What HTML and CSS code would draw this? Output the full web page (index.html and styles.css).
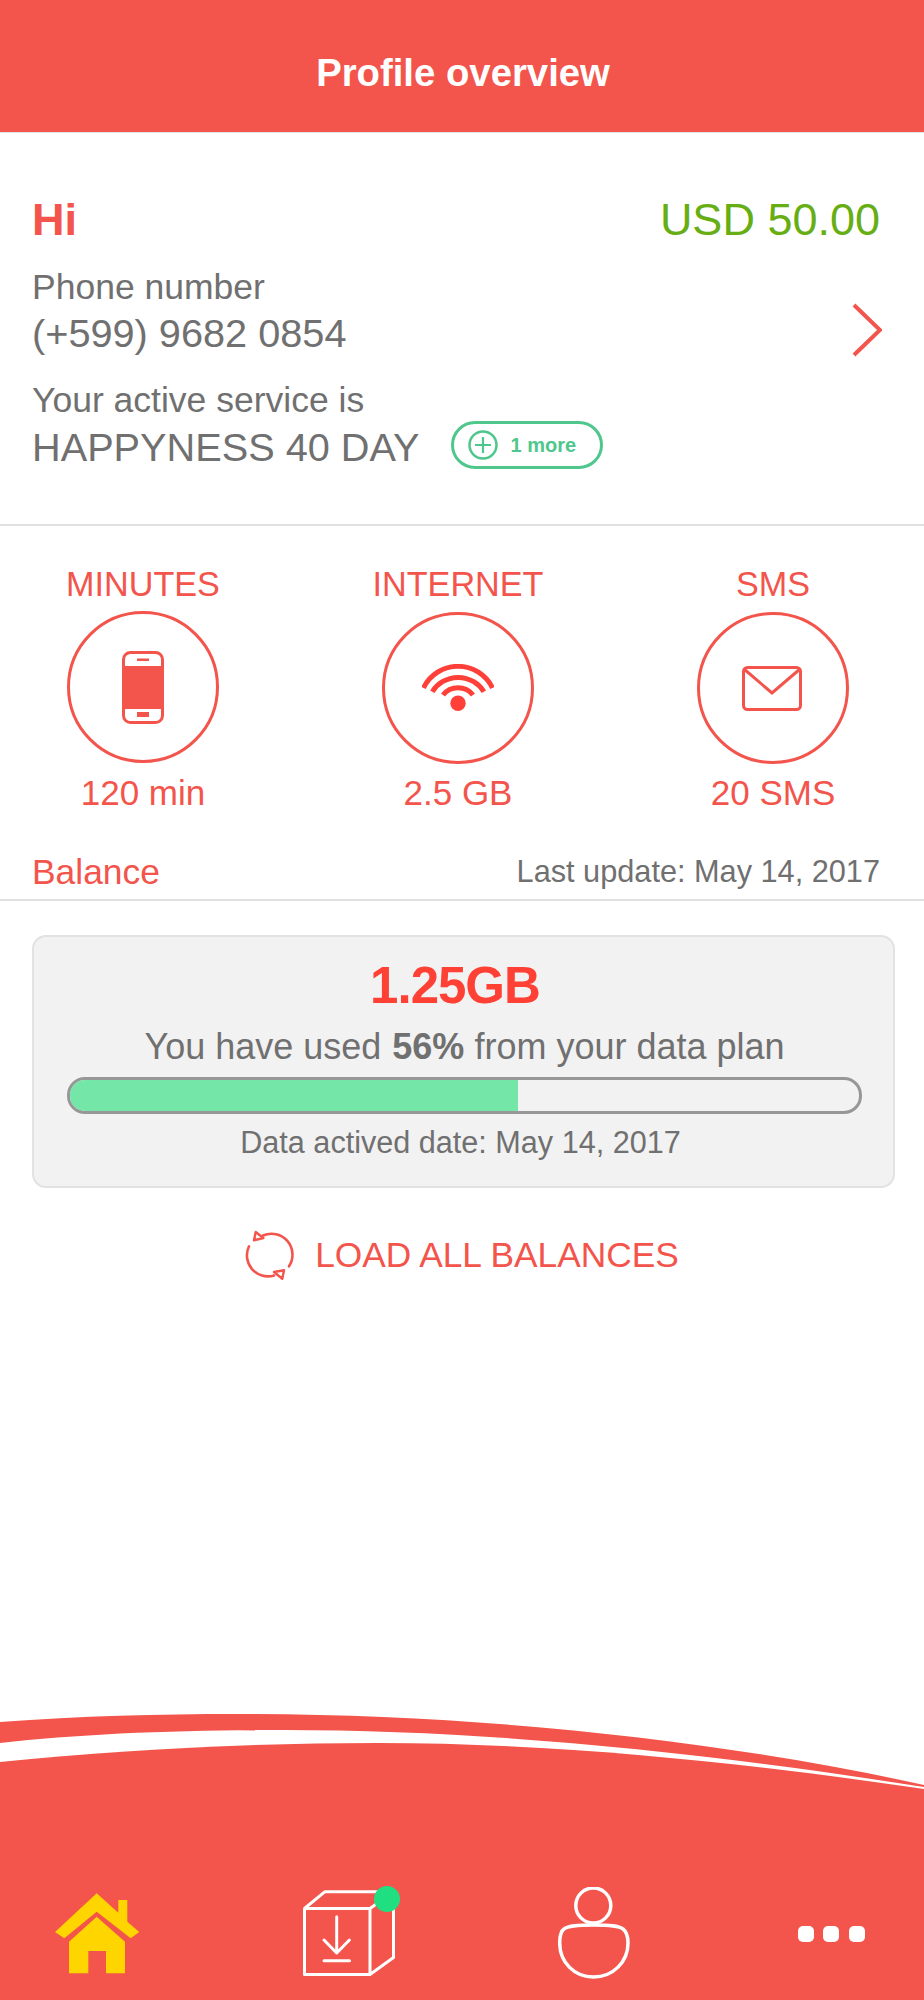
FILE: index.html
```html
<!DOCTYPE html>
<html>
<head>
  <meta charset="utf-8" />
  <title>Profile overview</title>
  <meta name="viewport" content="width=device-width, initial-scale=1">
  <link rel="stylesheet" href="styles.css">
</head>
<body>
  <div class="page">
    <header class="header">Profile overview</header>

    <section class="profile">
      <div class="row">
        <div class="hi">Hi</div>
        <div class="amount">USD 50.00</div>
      </div>
      <div class="row phone">
        <div>
          <div class="line">Phone number</div>
          <div class="value">(+599) 9682 0854</div>
        </div>
        <svg class="chevron" viewBox="0 0 30 54">
          <path d="M2 2 L28 27 L2 52" fill="none" stroke="#f3544b" stroke-width="4" />
        </svg>
      </div>
      <div class="service">
        <div class="line">Your active service is</div>
        <div class="plan">
          <span class="value">HAPPYNESS 40 DAY</span>
          <span class="more">
            <svg class="more-icon" viewBox="0 0 30 30">
              <circle cx="15" cy="15" r="13.5" fill="none" stroke="#4fc78c" stroke-width="2.5" />
              <path d="M15 7 V23 M7 15 H23" fill="none" stroke="#4fc78c" stroke-width="2.2" />
            </svg>
            1 more
          </span>
        </div>
      </div>
    </section>

    <section class="stats">
      <div class="stat">
        <div class="stat-text">MINUTES</div>
        <div class="circle">
          <svg class="icon-phone" viewBox="0 0 42 73">
            <rect x="1.5" y="1.5" width="39" height="70" rx="7" fill="none" stroke="#f3544b" stroke-width="3" />
            <rect x="1" y="15" width="40" height="43" fill="#f3544b" />
            <rect x="15" y="7.5" width="12" height="2.5" fill="#f3544b" />
            <rect x="15" y="61" width="12" height="5" fill="#f3544b" />
          </svg>
        </div>
        <div class="stat-value">120 min</div>
      </div>
      <div class="stat">
        <div class="stat-text">INTERNET</div>
        <div class="circle">
          <svg class="icon-wifi" viewBox="0 0 72 48">
            <path d="M1.5 24 A38.3 38.3 0 0 1 70.5 24" fill="none" stroke="#ff4038" stroke-width="5" />
            <path d="M10.3 27.7 A30.4 30.4 0 0 1 61.9 27.7" fill="none" stroke="#ff4038" stroke-width="5" />
            <path d="M21 31 A19 19 0 0 1 51 31" fill="none" stroke="#ff4038" stroke-width="5" />
            <circle cx="36" cy="39.3" r="7.7" fill="#ff4038" />
          </svg>
        </div>
        <div class="stat-value">2.5 GB</div>
      </div>
      <div class="stat">
        <div class="stat-text">SMS</div>
        <div class="circle">
          <svg class="icon-mail" viewBox="0 0 60 45">
            <rect x="1.5" y="1.5" width="57" height="42" rx="4" fill="none" stroke="#f3544b" stroke-width="3" />
            <path d="M2 3 L30 27 L58 3" fill="none" stroke="#f3544b" stroke-width="3" />
          </svg>
        </div>
        <div class="stat-value">20 SMS</div>
      </div>
    </section>

    <div class="balance-head">
      <span class="balance-title">Balance</span>
      <span class="update">Last update: May 14, 2017</span>
    </div>

    <section class="card">
      <div class="card-amount">1.25GB</div>
      <div class="card-used">You have used <b>56%</b> from your data plan</div>
      <div class="bar"><div class="bar-fill" style="width: 56.8%"></div></div>
      <div class="card-date">Data actived date: May 14, 2017</div>
    </section>

    <div class="load">
      <svg class="load-icon" viewBox="0 0 50 50">
        <path d="M18 5.5 A21 21 0 0 1 44 36.3" fill="none" stroke="#f3544b" stroke-width="2.6" stroke-linecap="round" />
        <path d="M4 16.3 A21 21 0 0 0 29 45.5" fill="none" stroke="#f3544b" stroke-width="2.6" stroke-linecap="round" />
        <path d="M10.7 2 L9 10.3 L18.3 8 Z" fill="none" stroke="#f3544b" stroke-width="2.4" stroke-linejoin="round" />
        <path d="M39 40.3 L37.3 48.7 L29 42 Z" fill="none" stroke="#f3544b" stroke-width="2.4" stroke-linejoin="round" />
      </svg>
      LOAD ALL BALANCES
    </div>

    <footer class="footer">
      <svg class="curve" viewBox="0 0 924 80" preserveAspectRatio="none">
        <path d="M0 12 C80 6 160 4 236 4 C480 4 720 30 924 75 L924 77 C720 45 500 20 283 20 C180 20 80 24 0 33 Z" fill="#f3544b" />
        <path d="M0 52 C120 40 250 33 377 33 C570 33 760 55 924 79 L924 80 L0 80 Z" fill="#f3544b" />
      </svg>
      <nav class="nav">
        <svg class="nav-home" viewBox="0 0 85 92">
          <path d="M41.7 6.3 L0 45 L9.3 51.3 L41.7 24.7 L75.7 51.3 L84.3 45 L72.3 34.7 L72.3 13 L63.3 13 L63.3 25.7 Z" fill="#ffd500" />
          <path d="M41.7 29.7 L70 54.7 L70 86.3 L51 86.3 L51 64 L33.3 64 L33.3 86.3 L14 86.3 L14 54.7 Z" fill="#ffd500" />
        </svg>
        <div class="nav-box">
          <svg class="nav-box-icon" viewBox="0 0 92 92">
            <path d="M1.5 21.5 H67 V87.5 H1.5 Z M1.5 21.5 L22 4.7 H90.5 V70.5 L67 87.5 M67 21.5 L90.5 4.7" fill="none" stroke="#fff" stroke-width="3" stroke-linejoin="round" />
            <path d="M33.7 29.7 V66 M21 53 L33.7 66 L46.4 53 M21 73.7 H46.5" fill="none" stroke="#fff" stroke-width="3" stroke-linecap="round" stroke-linejoin="round" />
          </svg>
          <span class="badge"></span>
        </div>
        <svg class="nav-person" viewBox="0 0 72 92">
          <circle cx="35.3" cy="18.5" r="17.5" fill="none" stroke="#fff" stroke-width="3.5" />
          <path d="M35.5 38 C20 38 10 38.5 6 42 C2 45 1.7 50 1.7 56 C1.7 75 16 90 35.5 90 C55 90 70 75 70 56 C70 50 69 45 65 42 C61 38.5 51 38 35.5 38 Z" fill="none" stroke="#fff" stroke-width="3.5" />
        </svg>
        <svg class="nav-more" viewBox="0 0 67 92">
          <rect x="0" y="39" width="16" height="16" rx="5" fill="#fff" />
          <rect x="25" y="39" width="16" height="16" rx="5" fill="#fff" />
          <rect x="51" y="39" width="16" height="16" rx="5" fill="#fff" />
        </svg>
      </nav>
    </footer>
  </div>
</body>
</html>
```

FILE: styles.css
```css
html,
body {
  padding: 0;
  margin: 0;
  height: 100%;
  width: 100%;
  background: white;
}

* {
  box-sizing: border-box;
}

.page {
  display: flex;
  flex-direction: column;
  min-height: 2000px;
  font-family: "Liberation Sans", Arial, sans-serif;
  color: #707070;
}

.header {
  height: 133px;
  padding: 13px 0 0 2px;
  display: flex;
  align-items: center;
  justify-content: center;
  background-color: #f3544b;
  border-bottom: 1px solid #e4e4e4;
  color: white;
  font-size: 38.3px;
  font-weight: bold;
}

.profile {
  padding: 63px 44px 53px 32px;
  border-bottom: 2px solid #e0e0e0;
}

.row {
  display: flex;
  justify-content: space-between;
}

.hi {
  font-size: 45px;
  line-height: 48px;
  font-weight: bold;
  color: #f3544b;
}

.amount {
  font-size: 45px;
  line-height: 48px;
  color: #66ae14;
}

.phone {
  align-items: flex-end;
  margin-top: 21px;
}

.chevron {
  width: 30px;
  height: 54px;
  margin-right: -2px;
}

.line {
  font-size: 35.5px;
  line-height: 45px;
}

.value {
  font-size: 39.7px;
  line-height: 47px;
}

.service {
  margin-top: 21px;
}

.plan {
  display: flex;
  align-items: center;
}

.more {
  display: flex;
  align-items: center;
  gap: 12px;
  width: 152px;
  height: 48px;
  margin: -2px 0 2px 32px;
  padding-left: 14px;
  border: 3px solid #4fc78c;
  border-radius: 24px;
  color: #4fc78c;
  font-size: 20px;
  font-weight: bold;
}

.more-icon {
  width: 30px;
  height: 30px;
  flex-shrink: 0;
}

.stats {
  display: flex;
  justify-content: space-between;
  padding: 38px 56px 0 48px;
}

.stat {
  width: 190px;
  display: flex;
  flex-direction: column;
  align-items: center;
}

.stat-text {
  font-size: 34.2px;
  line-height: 40px;
  color: #f3544b;
  white-space: nowrap;
}

.stat-value {
  font-size: 35px;
  line-height: 40px;
  color: #f3544b;
  white-space: nowrap;
}

.circle {
  width: 152px;
  height: 152px;
  margin: 8px 0 9px;
  display: flex;
  align-items: center;
  justify-content: center;
  border: 3px solid #f3544b;
  border-radius: 50%;
}

.stat:first-child .circle {
  margin: 7px 0 10px;
}

.icon-phone {
  width: 42px;
  height: 73px;
}

.icon-wifi {
  width: 72px;
  height: 48px;
}

.icon-mail {
  width: 60px;
  height: 45px;
  margin-left: -2px;
}

.balance-head {
  display: flex;
  justify-content: space-between;
  align-items: center;
  height: 48px;
  margin-top: 40px;
  padding: 0 44px 8px 32px;
  border-bottom: 2px solid #e0e0e0;
}

.balance-title {
  font-size: 35.4px;
  color: #f3544b;
}

.update {
  font-size: 30.7px;
}

.card {
  margin: 34px 29px 0 32px;
  height: 253px;
  padding: 22px 31px 0 33px;
  background: #f2f2f2;
  border: 2px solid #e2e2e2;
  border-radius: 14px;
  text-align: center;
}

.card-amount {
  padding-right: 19px;
  font-size: 51px;
  line-height: 54px;
  font-weight: bold;
  letter-spacing: -1px;
  color: #ff4035;
}

.card-used {
  margin-top: 11px;
  font-size: 36px;
  line-height: 45px;
}

.card-used b {
  margin-left: 1px;
}

.bar {
  height: 37px;
  margin-top: 8px;
  background: #f2f2f2;
  border: 3px solid #979797;
  border-radius: 18px;
  overflow: hidden;
}

.bar-fill {
  height: 100%;
  background: #74e6a8;
}

.card-date {
  margin-top: 8px;
  padding-right: 8px;
  font-size: 30.6px;
  line-height: 40px;
}

.load {
  display: flex;
  align-items: center;
  justify-content: center;
  gap: 20px;
  margin-top: 42px;
  font-size: 35.3px;
  line-height: 50px;
  color: #f3544b;
}

.load-icon {
  width: 50px;
  height: 50px;
}

.footer {
  margin-top: auto;
}

.curve {
  display: block;
  width: 924px;
  height: 80px;
}

.nav {
  display: flex;
  height: 210px;
  padding: 97px 0 0 55px;
  background-color: #f3544b;
}

.nav svg {
  display: block;
  height: 92px;
}

.nav-home {
  width: 85px;
  margin-right: 163px;
}

.nav-box {
  position: relative;
  width: 92px;
  margin-right: 163px;
}

.nav-box .nav-box-icon {
  width: 92px;
}

.badge {
  position: absolute;
  top: -1px;
  right: -5px;
  width: 26px;
  height: 26px;
  border-radius: 50%;
  background: #20df80;
}

.nav-person {
  width: 72px;
  margin-right: 168px;
}

.nav-more {
  width: 67px;
}
```
